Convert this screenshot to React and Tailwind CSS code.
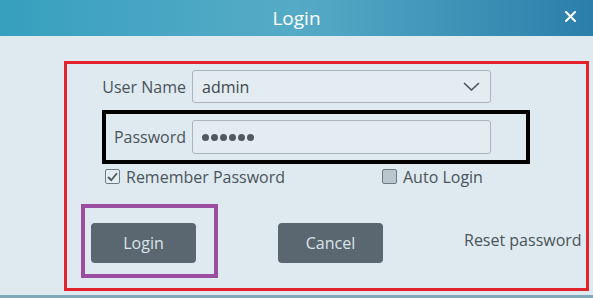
import React from "react";

const font = { fontFamily: '"Open Sans", "Noto Sans", sans-serif' };

const App = () => {
  return (
    <div
      className="w-[593px] h-[298px] bg-[#dfeaf0] overflow-hidden flex flex-col border-b-[3px] border-[#7fa9b8]"
      style={font}
    >
      {/* title bar */}
      <div className="h-[36px] shrink-0 flex items-center bg-gradient-to-r from-[#36a0bf] via-[#55abc6] to-[#2b7eaa]">
        <div className="w-[46px]" />
        <div className="flex-1 text-center text-white text-[19px] leading-none">
          Login
        </div>
        <div className="w-[46px] flex items-center justify-center pb-[4px]">
          <svg width="11" height="11" viewBox="0 0 11 11">
            <path d="M1 1L10 10M10 1L1 10" stroke="white" strokeWidth="2" strokeLinecap="round" />
          </svg>
        </div>
      </div>

      {/* red frame */}
      <div className="ml-[64px] mt-[25px] w-[525px] h-[230px] border-[3px] border-[#e3222b]">
        {/* user name */}
        <div className="mt-[6px] flex items-center">
          <div className="w-[119px] text-right text-[16px] text-[#4a535a]">User Name</div>
          <div className="ml-[6px] w-[299px] h-[33px] rounded-[3px] border border-[#a9b5bd] bg-[#e2ecf1] flex items-center justify-between pl-[9px] pr-[10px]">
            <span className="text-[16px] text-[#3f474d]">admin</span>
            <svg width="17" height="9" viewBox="0 0 17 9">
              <path d="M1 1L8.5 8L16 1" fill="none" stroke="#4a535a" strokeWidth="1.6" />
            </svg>
          </div>
        </div>

        {/* password in black frame */}
        <div className="mt-[7px] ml-[35px] w-[428px] h-[54px] border-4 border-black flex items-center">
          <div className="w-[80px] text-right text-[16px] text-[#4a535a]">Password</div>
          <div className="ml-[6px] w-[299px] h-[34px] rounded-[3px] border border-[#a9b5bd] bg-[#e2ecf1] flex items-center pl-[9px] gap-[2px]">
            {[0, 1, 2, 3, 4, 5].map((i) => (
              <span key={i} className="w-[7px] h-[7px] rounded-full bg-[#525a61]" />
            ))}
          </div>
        </div>

        {/* checkboxes */}
        <div className="mt-[4px] flex items-center h-[17px]">
          <div className="ml-[38px] w-[277px] flex items-center gap-[6px]">
            <span className="w-[15px] h-[15px] rounded-[2px] border border-[#6f7b83] bg-[#e4edf2] flex items-center justify-center">
              <svg width="11" height="10" viewBox="0 0 11 10">
                <path d="M1 5L4.2 8.2L10 1.2" fill="none" stroke="#4d565d" strokeWidth="1.8" />
              </svg>
            </span>
            <span className="text-[16px] text-[#4a535a]">Remember Password</span>
          </div>
          <div className="flex items-center gap-[6px]">
            <span className="w-[15px] h-[15px] rounded-[2px] border border-[#6f7b83] bg-[#bac6cd]" />
            <span className="text-[16px] text-[#4a535a]">Auto Login</span>
          </div>
        </div>

        {/* buttons */}
        <div className="mt-[19px] flex items-start">
          <div className="ml-[14px] w-[137px] h-[74px] border-4 border-[#9b4d9f] pt-[15px] pl-[6px]">
            <button className="w-[105px] h-[40px] rounded-[4px] bg-[#5a6670] text-[#dbe3e8] text-[16px]">
              Login
            </button>
          </div>
          <button className="ml-[60px] mt-[19px] w-[105px] h-[40px] rounded-[4px] bg-[#5a6670] text-[#dbe3e8] text-[16px]">
            Cancel
          </button>
          <span className="ml-[81px] mt-[28px] text-[16px] leading-none text-[#4a535a] whitespace-nowrap">
            Reset password
          </span>
        </div>
      </div>
    </div>
  );
};

export default App;
